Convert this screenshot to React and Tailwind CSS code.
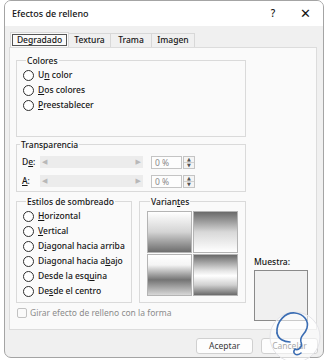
const FONT = "font-['Noto_Sans','DejaVu_Sans',sans-serif]";

function Radio({ children }) {
    return (
        <div className="flex items-center h-[15px] gap-[4px]">
            <span className="w-[11px] h-[11px] rounded-full border border-[#2e2e2e] bg-white shrink-0" />
            <span>{children}</span>
        </div>
    );
}

function Group({ title, className, children }) {
    return (
        <fieldset className={`border border-[#dadada] ${className}`}>
            <legend className="ml-[3px] px-[1px] leading-[13px]">{title}</legend>
            {children}
        </fieldset>
    );
}

function SliderRow({ label }) {
    return (
        <div className="flex items-center h-[12px]">
            <span className="w-[23px] pl-[5px]">{label}</span>
            <div className="w-[103px] h-[12px] bg-[#ececec] flex items-center justify-between px-[2px] text-[7px] text-[#b8b8b8]">
                <span>◀</span>
                <span>▶</span>
            </div>
            <div className="ml-[8px] w-[31px] h-[13px] border border-[#c4c4c4] bg-[#fdfdfd] text-[#8a8a8a] pl-[3px] leading-[11px] font-normal">0 %</div>
            <div className="ml-[1px] w-[12px] h-[13px] border border-[#c4c4c4] bg-[#f4f4f4] flex flex-col text-[5px] leading-[5px] text-[#555] items-center justify-center">
                <span>▲</span>
                <span className="w-full border-t border-[#d0d0d0]" />
                <span>▼</span>
            </div>
        </div>
    );
}

function Swatch({ gradient }) {
    return <div className={`h-[42px] border border-[#b4b4b4] ${gradient}`} />;
}

export default function App() {
    return (
        <div className={`w-[328px] h-[360px] bg-white pl-[4px] text-[8.5px] font-medium text-[#141414] ${FONT} relative`}>
            <div className="w-[320px] h-[358px] border border-[#a4a4a4] rounded-[7px] bg-[#f0f0f0] flex flex-col overflow-hidden">
                {/* title bar */}
                <div className="h-[25px] bg-white flex items-center pl-[7px] pr-[12px] text-[9px]">
                    <span className="flex-1">Efectos de relleno</span>
                    <span className="w-[10px] text-center text-[10px]">?</span>
                    <span className="ml-[22px] text-[13px] leading-none font-light">✕</span>
                </div>

                {/* tabs */}
                <div className="mt-[6px] ml-[5px] flex items-end h-[15px]">
                    <div className="h-[15px] w-[59px] bg-[#fafafa] border-x border-t border-[#d8d8d8] px-[1px] pt-[1px]">
                        <div className="h-[12px] border border-[#555] flex items-center justify-center leading-none">Degradado</div>
                    </div>
                    <div className="h-[14px] w-[42px] border-t border-r border-[#d8d8d8] flex items-center justify-center">Textura</div>
                    <div className="h-[14px] w-[41px] border-t border-r border-[#d8d8d8] flex items-center justify-center">Trama</div>
                    <div className="h-[14px] w-[43px] border-t border-r border-[#d8d8d8] flex items-center justify-center">Imagen</div>
                </div>

                {/* panel */}
                <div className="ml-[4px] w-[308px] h-[283px] border border-[#dcdcdc] bg-[#fafafa] flex pl-[6px] pr-[7px] pb-[7px]">
                    <div className="w-[230px] flex flex-col pt-[6px]">
                        <Group title="Colores" className="pl-[6px] pt-[1px] pb-[23px]">
                            <Radio>U<u>n</u> color</Radio>
                            <Radio><u>D</u>os colores</Radio>
                            <Radio><u>P</u>reestablecer</Radio>
                        </Group>

                        <Group title="Transparencia" className="mt-[1px] pt-[5px] pb-[4px] flex flex-col gap-[7px]">
                            <SliderRow label={<>D<u>e</u>:</>} />
                            <SliderRow label={<><u>A</u>:</>} />
                        </Group>

                        <div className="mt-[3px] flex gap-[7px]">
                            <Group title="Estilos de sombreado" className="w-[116px] pl-[6px] pt-[1px] pb-[3px]">
                                <Radio><u>H</u>orizontal</Radio>
                                <Radio><u>V</u>ertical</Radio>
                                <Radio>D<u>i</u>agonal hacia arriba</Radio>
                                <Radio>Diagonal hacia a<u>b</u>ajo</Radio>
                                <Radio>Desde la esq<u>u</u>ina</Radio>
                                <Radio>De<u>s</u>de el centro</Radio>
                            </Group>
                            <Group title={<>Varian<u>t</u>es</>} className="flex-1 pl-[7px] pr-[7px] pt-[3px] pb-[4px]">
                                <div className="grid grid-cols-2 gap-[1px]">
                                    <Swatch gradient="bg-gradient-to-b from-white via-[#d4d4d4] to-[#6e6e6e]" />
                                    <Swatch gradient="bg-gradient-to-b from-[#6a6a6a] via-[#d8d8d8] to-white" />
                                    <Swatch gradient="bg-[linear-gradient(to_bottom,#ffffff_0%,#f4f4f4_25%,#747474_62%,#d8d8d8_100%)]" />
                                    <Swatch gradient="bg-[linear-gradient(to_bottom,#6a6a6a_0%,#e6e6e6_40%,#ffffff_52%,#d0d0d0_75%,#6a6a6a_100%)]" />
                                </div>
                            </Group>
                        </div>

                        <div className="mt-[4px] flex items-center gap-[3px] text-[#8c8c8c] font-normal">
                            <span className="w-[10px] h-[10px] border border-[#c2c2c2] rounded-[2px] bg-[#fafafa] ml-[1px]" />
                            <span>Girar efecto de relleno con la forma</span>
                        </div>
                    </div>

                    <div className="flex-1 ml-[8px] flex flex-col justify-end pb-[1px]">
                        <span className="leading-[13px]">Muestra:</span>
                        <div className="mt-[2px] w-[54px] h-[51px] border border-[#8a8a8a] bg-[#f0f0f0]" />
                    </div>
                </div>

                {/* footer */}
                <div className="flex justify-end gap-[8px] pr-[5px] mt-[8px]">
                    <button className="w-[57px] h-[16px] border border-[#d0d0d0] rounded-[3px] bg-[#fdfdfd] text-[#3a3a3a] font-normal leading-none">Aceptar</button>
                    <button className="w-[57px] h-[16px] border border-[#d0d0d0] rounded-[3px] bg-[#fdfdfd] text-[#3a3a3a] font-normal leading-none">Cancelar</button>
                </div>
            </div>

            {/* watermark */}
            <svg className="absolute left-[268px] top-[309px]" width="54" height="52" viewBox="0 0 54 52">
                <circle cx="27" cy="28" r="25" fill="white" fillOpacity="0.55" stroke="#e4e4e8" strokeWidth="1" />
                <path d="M9 24 C8 12 18 3 27 4 C36 5 41 12 39 19 C37 26 31 27 33 33 C35 38 30 42 27 40 M27 40 C24 44 28 48 33 44"
                    fill="none" stroke="#3b6db3" strokeWidth="1.6" strokeLinecap="round" />
                <path d="M9 24 C10 30 16 33 22 33" fill="none" stroke="#3b6db3" strokeWidth="1.6" strokeLinecap="round" />
            </svg>
        </div>
    );
}
